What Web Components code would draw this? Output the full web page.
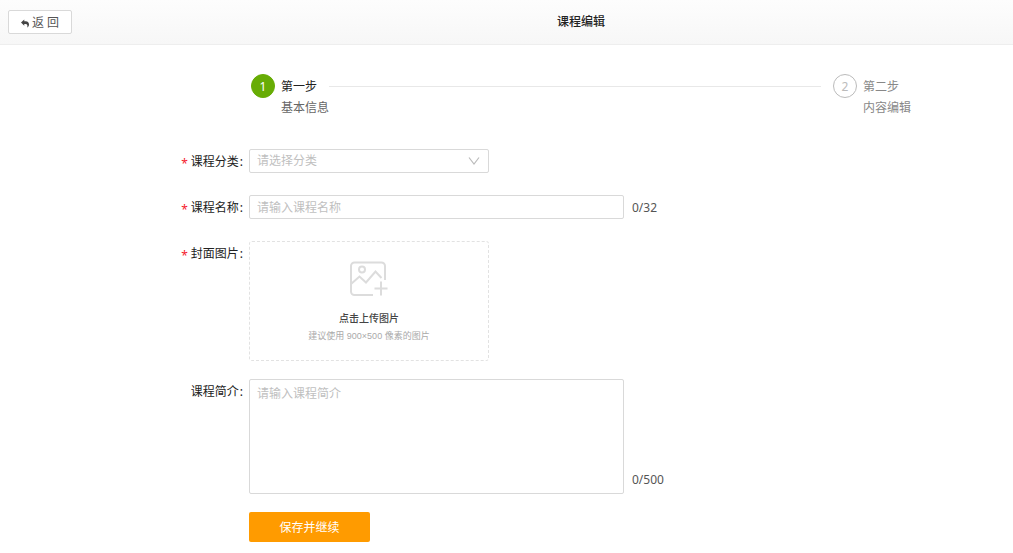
<!DOCTYPE html>
<html lang="zh-CN">
<head>
<meta charset="utf-8">
<title>课程编辑</title>
<style>
body { margin: 0; background: #fff; color: #222; font: 12px/20px "Noto Sans", "Noto Sans CJK SC", sans-serif; --aside: 149px; }
</style>
</head>
<body>
<course-page></course-page>
<script>
function define(name, html) {
  const t = document.createElement('template');
  t.innerHTML = '<style>*{box-sizing:border-box}</style>' + html;
  customElements.define(name, class extends HTMLElement {
    constructor() {
      super();
      this.attachShadow({ mode: 'open' }).append(t.content.cloneNode(true));
    }
  });
}

define('page-header', `
<style>
:host { display: grid; grid-template-columns: var(--aside) 1fr; align-items: center; height: 45px; box-sizing: border-box; border-bottom: 1px solid #eee; background: linear-gradient(#fdfdfd, #f7f7f7); }
button { display: flex; align-items: center; justify-content: center; gap: 3px; justify-self: start; width: 64px; height: 24px; margin-left: 8px; padding: 2px 0 0; border: 1px solid #d9d9d9; border-radius: 2px; background: #fff; color: #555; font: inherit; }
h1 { margin: 0; text-align: center; font-size: 12px; font-weight: 500; }
</style>
<button type="button"><svg width="8" height="9" viewBox="0 0 9 9" aria-hidden="true"><path d="M0 3.4 3.7 0v2h1.6C7.8 2 9 3.6 9 5.6 9 7 8.3 8.3 7 9c.6-1.900.3-3.900-2-3.900H3.700v2z" fill="#444"/></svg>返 回</button>
<h1><slot></slot></h1>`);

define('step-item', `
<style>
:host { display: grid; grid-template-columns: 24px auto; column-gap: 6px; color: #888; }
.dot { width: 24px; height: 24px; border: 1px solid #bbb; border-radius: 50%; color: #bbb; text-align: center; line-height: 23px; }
.title { line-height: 26px; }
.note { grid-column: 2; line-height: 16px; }
:host([active]) { color: #666; }
:host([active]) .dot { background: #67ac05; border-color: #67ac05; color: #fff; }
:host([active]) .title { color: #222; }
</style>
<div class="dot"><slot name="number"></slot></div>
<div class="title"><slot name="title"></slot></div>
<div class="note"><slot></slot></div>`);

define('step-bar', `
<style>
:host { display: flex; width: 660px; max-width: 100%; margin: 0 auto; }
hr { flex: 1; height: 1px; margin: 12px 12px 0 0; border: 0; background: #e8e8e8; }
</style>
<slot name="first"></slot><hr><slot name="second"></slot>`);

define('form-row', `
<style>
:host { display: grid; grid-template-columns: 96px 1fr; column-gap: 4px; align-items: start; min-height: 28px; }
.label { display: flex; justify-content: flex-end; line-height: 26px; }
.star { display: none; color: #f5222d; margin-right: 3px; padding-top: 2px; }
:host([required]) .star { display: block; }
.colon { margin: 0 2px 0 1px; }
.control { display: flex; gap: 8px; align-items: flex-start; }
</style>
<div class="label"><span class="star">*</span><slot name="label"></slot><slot name="colon"><span class="colon">:</span></slot></div>
<div class="control"><slot></slot></div>`);

define('image-upload', `
<style>
:host { display: block; width: 240px; }
label { display: flex; flex-direction: column; align-items: center; height: 120px; padding-top: 19px; border: 1px dashed #e2e2e2; border-radius: 3px; font-family: "Liberation Sans", "Noto Sans CJK SC", sans-serif; cursor: pointer; }
input { position: absolute; width: 1px; height: 1px; opacity: 0; }
strong { margin-top: 11px; font-size: 10px; font-weight: 500; color: #444; }
small { font-size: 9px; line-height: 14px; color: #aaa; }
</style>
<label><input type="file" accept="image/*">
<svg width="40" height="37" viewBox="0 0 40 37" fill="none" stroke="#dcdcdc" stroke-width="2" aria-hidden="true"><path d="M24 34H5.500A3.500 3.500 0 0 1 2 30.500V5A3.500 3.500 0 0 1 5.500 1.500h27A3.500 3.500 0 0 1 36 5v14M2 23l8.500-7.500 6.500 6 9.500-11 6 6.500M32 20.500v14M25.500 27.500h13"/><circle cx="13" cy="8.500" r="3"/></svg>
<strong>点击上传图片</strong><small>建议使用 900×500 像素的图片</small></label>`);

define('course-form', `
<style>
:host { display: block; }
form { display: flex; flex-direction: column; gap: 18px; }
input, select, textarea { display: block; margin: 0; padding: 0 7px; border: 1px solid #d9d9d9; border-radius: 2px; background: #fff; color: #222; font: inherit; appearance: none; outline: 0; }
input, select { height: 24px; }
input, textarea { width: 375px; }
textarea { height: 115px; padding: 4px 7px; resize: none; }
::placeholder, select:invalid { color: #bfbfbf; opacity: 1; }
.select { display: grid; width: 240px; align-items: center; }
.select > * { grid-area: 1 / 1; }
.select svg { justify-self: end; margin-right: 9px; pointer-events: none; }
output { color: #555; line-height: 26px; }
textarea + output { align-self: flex-end; line-height: 28px; }
.submit { width: 121px; height: 30px; padding: 2px 0 0; border: 0; border-radius: 2px; background: #ff9b00; color: #fff; font: inherit; }
</style>
<form>
<form-row required><label slot="label" for="category">课程分类</label>
<div class="select"><select id="category" required><option value="" selected>请选择分类</option></select><svg width="12" height="10" viewBox="0 0 12 10" fill="none" stroke="#bbb" stroke-width="1.200" aria-hidden="true"><path d="M1 1.500 6 8l5-6.500"/></svg></div></form-row>
<form-row required><label slot="label" for="name">课程名称</label>
<input id="name" type="text" maxlength="32" placeholder="请输入课程名称"><output for="name">0/32</output></form-row>
<form-row required><span slot="label">封面图片</span><image-upload></image-upload></form-row>
<form-row><label slot="label" for="intro">课程简介</label>
<textarea id="intro" maxlength="500" placeholder="请输入课程简介"></textarea><output for="intro">0/500</output></form-row>
<form-row><span slot="colon"></span><button class="submit" type="submit">保存并继续</button></form-row>
</form>`);

define('course-page', `
<style>
:host { display: block; }
main { padding: 29px 0 8px var(--aside); }
course-form { margin-top: 33px; }
</style>
<page-header>课程编辑</page-header>
<main>
<step-bar>
<step-item slot="first" active><span slot="number">1</span><span slot="title">第一步</span>基本信息</step-item>
<step-item slot="second"><span slot="number">2</span><span slot="title">第二步</span>内容编辑</step-item>
</step-bar>
<course-form></course-form>
</main>`);
</script>
</body>
</html>
